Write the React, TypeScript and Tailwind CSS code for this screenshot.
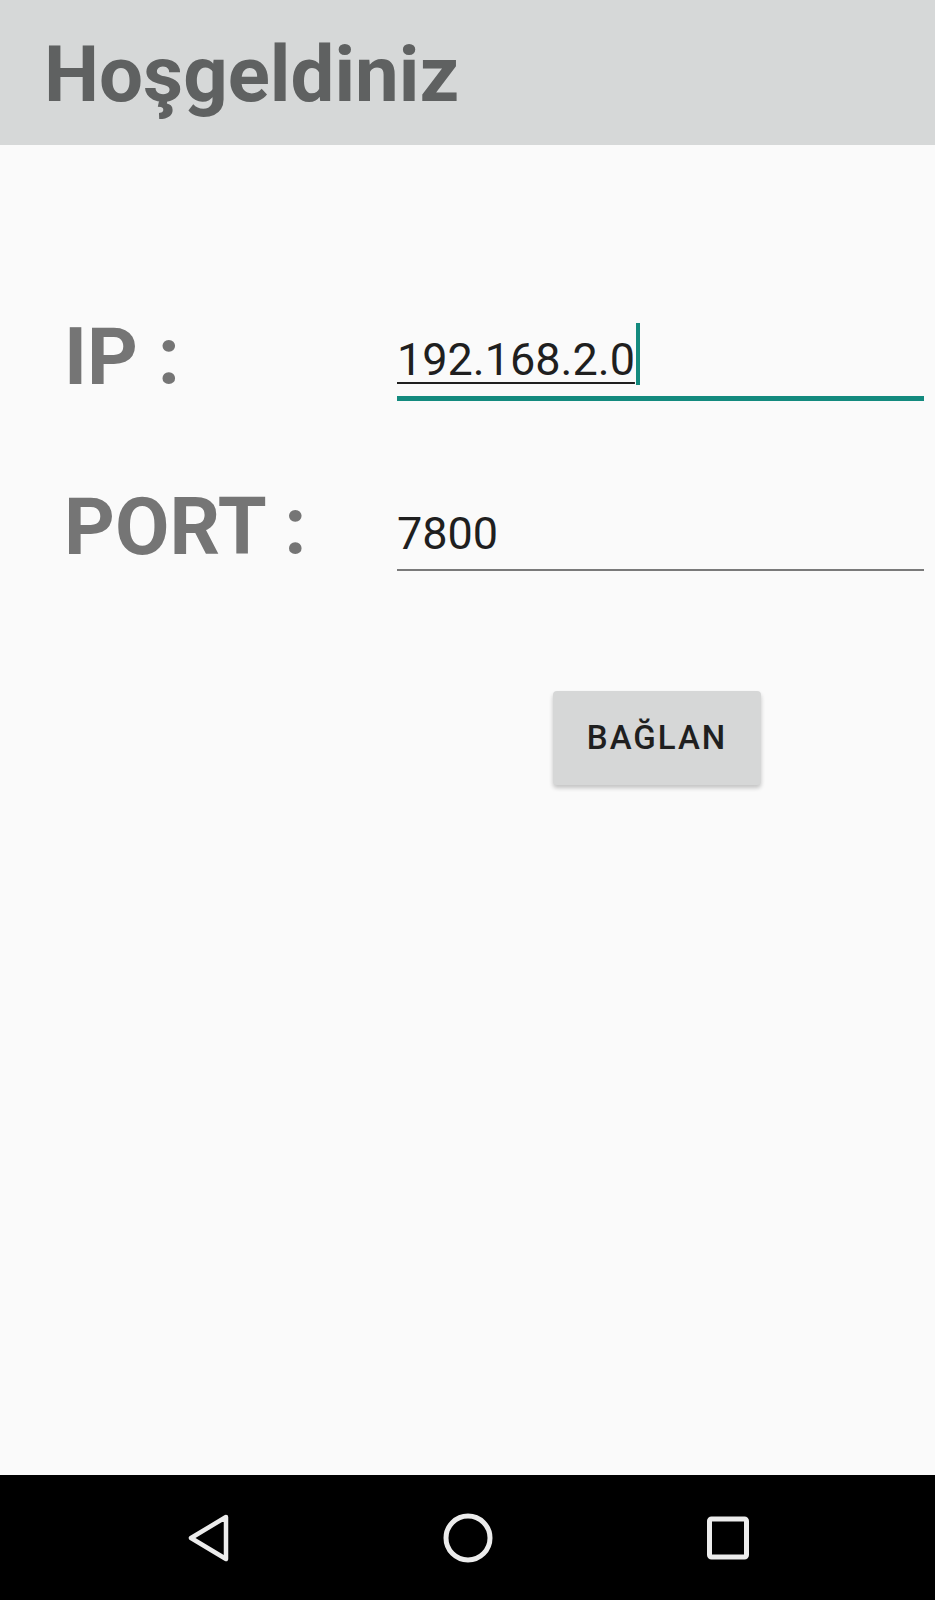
import React from "react";

export default function App() {
  const font = { fontFamily: "Roboto, 'Noto Sans', sans-serif" };
  return (
    <div className="flex h-[1600px] w-[935px] flex-col bg-[#fafafa]" style={font}>
      <div className="h-[145px] shrink-0 bg-[#d6d8d8] pl-[44px] pt-[36px]">
        <div className="text-[78px] font-bold leading-none text-[#5f6161]">Hoşgeldiniz</div>
      </div>
      <div className="flex flex-1 flex-col pt-[173px]">
        <div className="flex">
          <div className="w-[397px] shrink-0 pl-[64px] text-[79px] font-bold leading-none text-[#757575]">IP :</div>
          <div className="mr-[11px] flex flex-1 flex-col pt-[19px]">
            <div className="text-[45px] leading-none text-[#1f1f1f]">
              <span className="relative underline decoration-[2px] underline-offset-[7px] decoration-[#1f1f1f]">
                192.168.2.0
                <span className="absolute right-[-5px] top-[-10px] h-[62px] w-[4px] bg-[#138a7e]" />
              </span>
            </div>
            <div className="mt-[14px] h-[5px] bg-[#138a7e]" />
          </div>
        </div>
        <div className="mt-[87px] flex">
          <div className="w-[397px] shrink-0 pl-[64px] text-[79px] font-bold leading-none text-[#757575]">PORT :</div>
          <div className="mr-[11px] flex flex-1 flex-col pt-[23px]">
            <div className="text-[45px] leading-none text-[#1f1f1f]">7800</div>
            <div className="mt-[13px] h-[2px] bg-[#7a7a7a]" />
          </div>
        </div>
        <div className="mt-[120px] flex pl-[553px]">
          <button className="flex h-[94px] w-[208px] items-center justify-center rounded-[4px] bg-[#d6d7d7] text-[33px] font-medium tracking-[2px] text-[#1f1f1f] shadow-[0_3px_4px_rgba(0,0,0,0.22)]">
            BAĞLAN
          </button>
        </div>
      </div>
      <div className="flex h-[125px] shrink-0 items-center justify-center gap-[200px] bg-black">
        <svg width="60" height="60" viewBox="0 0 60 60" fill="none">
          <path d="M48 9 L13 30 L48 51 Z" stroke="#ececec" strokeWidth="4.5" strokeLinejoin="round" />
        </svg>
        <svg width="60" height="60" viewBox="0 0 60 60" fill="none">
          <circle cx="30" cy="30" r="22" stroke="#ececec" strokeWidth="5" />
        </svg>
        <svg width="60" height="60" viewBox="0 0 60 60" fill="none">
          <rect x="11.5" y="11" width="37" height="38" rx="2" stroke="#ececec" strokeWidth="5" />
        </svg>
      </div>
    </div>
  );
}
